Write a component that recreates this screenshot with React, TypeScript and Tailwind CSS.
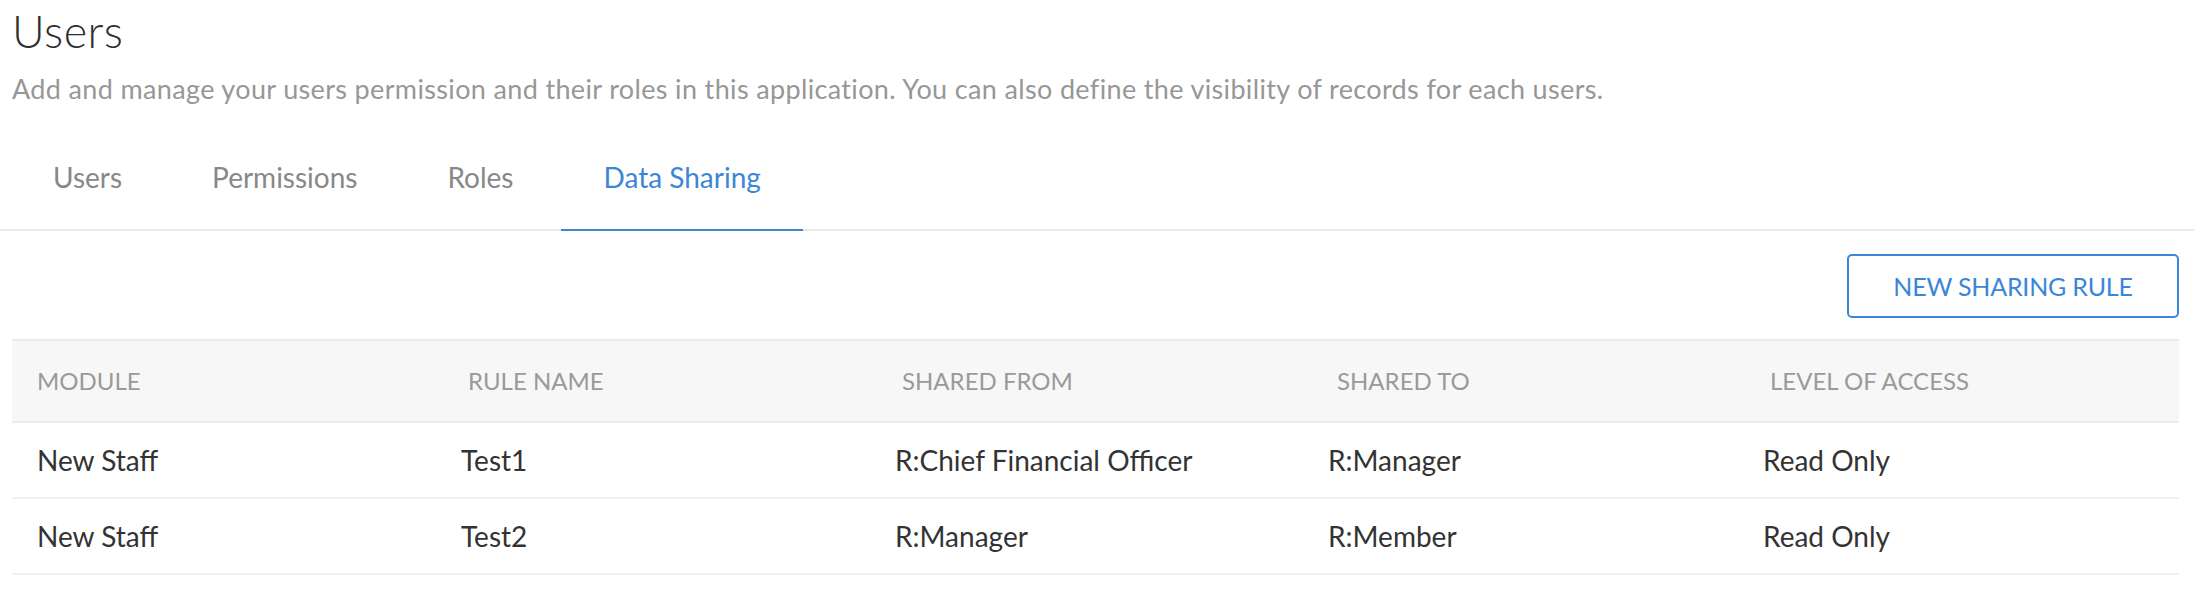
import { useState } from 'react';

const TABS = ['Users', 'Permissions', 'Roles', 'Data Sharing'];

const RULES = [
  { module: 'New Staff', name: 'Test1', from: 'R:Chief Financial Officer', to: 'R:Manager', access: 'Read Only' },
  { module: 'New Staff', name: 'Test2', from: 'R:Manager', to: 'R:Member', access: 'Read Only' },
];

export default function App() {
  const [active, setActive] = useState('Data Sharing');

  return (
    <div className="min-h-screen bg-white font-['Lato','Liberation_Sans',sans-serif]">
      <div className="px-[12px] pt-[9px]">
        <h1 className="text-[45px] leading-[44px] font-light tracking-[0.5px] text-[#2e2e2e]">Users</h1>
        <p className="mt-[23px] text-[27px] leading-[26px] tracking-[0.35px] text-[#979797]">
          Add and manage your users permission and their roles in this application. You can also define the visibility of records for each users.
        </p>
      </div>

      {/* Tabs */}
      <div className="mt-[26px] flex gap-[6px] border-b-2 border-[#e9e9e9] pl-[11px]">
        {TABS.map((t) => (
          <button
            key={t}
            onClick={() => setActive(t)}
            className={`px-[42px] pt-[35px] pb-[38px] text-[28px] leading-[28px] border-b-2 -mb-[2px] ${
              active === t ? 'text-[#3b86d6] border-[#3b86d6]' : 'text-[#888888] border-transparent'
            }`}
          >
            {t}
          </button>
        ))}
      </div>

      <div className="pl-[12px] pr-[15px]">
        <div className="flex justify-end pt-[23px] pb-[21px]">
          <button className="w-[332px] h-[64px] rounded-[5px] border-2 border-[#3b86d6] text-[#3b86d6] text-[25px] leading-none tracking-[-0.2px]">
            NEW SHARING RULE
          </button>
        </div>

        {/* Table */}
        <div>
          <div className="grid grid-cols-[431px_434px_435px_433px_1fr] items-center h-[84px] bg-[#f7f7f7] border-y-2 border-[#ececec] text-[24px] leading-none text-[#9a9a9a]">
            <div className="pl-[25px]">MODULE</div>
            <div className="pl-[25px]">RULE NAME</div>
            <div className="pl-[25px]">SHARED FROM</div>
            <div className="pl-[25px]">SHARED TO</div>
            <div className="pl-[25px]">LEVEL OF ACCESS</div>
          </div>
          {RULES.map((r) => (
            <div
              key={r.name}
              className="grid grid-cols-[424px_434px_433px_435px_1fr] items-center h-[76px] border-b-2 border-[#f0f0f0] text-[28px] leading-none text-[#333333]"
            >
              <div className="pl-[25px]">{r.module}</div>
              <div className="pl-[25px]">{r.name}</div>
              <div className="pl-[25px]">{r.from}</div>
              <div className="pl-[25px]">{r.to}</div>
              <div className="pl-[25px]">{r.access}</div>
            </div>
          ))}
        </div>
      </div>
    </div>
  );
}
